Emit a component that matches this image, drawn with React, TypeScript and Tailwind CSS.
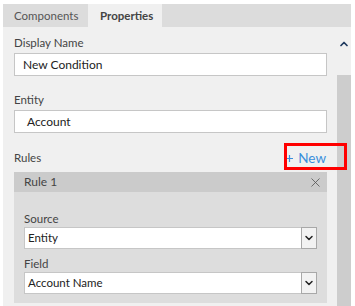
import { ChevronDown, ChevronUp, X } from 'lucide-react';

function TextField({ value, indent }: { value: string; indent: string }) {
  return (
    <div className={`h-[23px] bg-white border border-[#c6c6c6] flex items-center text-[12px] text-[#222] ${indent}`}>
      {value}
    </div>
  );
}

function SelectField({ value }: { value: string }) {
  return (
    <div className="h-[22px] bg-white border border-[#c6c6c6] flex items-center text-[11.5px] text-[#222]">
      <span className="flex-1 pl-[3px]">{value}</span>
      <span className="w-[16px] h-[22px] -mr-px border border-[#a8a8a8] bg-[#f2f2f2] flex items-center justify-center">
        <ChevronDown size={12} strokeWidth={3} className="text-[#222]" />
      </span>
    </div>
  );
}

export default function App() {
  return (
    <div
      className="w-[355px] h-[306px] bg-white pt-[4px] pl-[3px] pr-[4px] overflow-hidden"
      style={{ fontFamily: 'Lato, "Open Sans", sans-serif' }}
    >
      <div className="h-full flex flex-col bg-[#f0f0f0]">
        {/* tabs */}
        <div className="h-[23px] bg-[#dcdcdc] flex text-[11.5px] shrink-0">
          <div className="w-[85px] pl-[11px] flex items-center text-[#555]">Components</div>
          <div className="w-[74px] pl-[12px] flex items-center bg-[#f0f0f0] text-[#444] font-bold">Properties</div>
        </div>

        <div className="flex flex-1 min-h-0">
          {/* content */}
          <div className="flex-1 pl-[11px] pr-[10px] pt-[8px] relative">
            <div className="leading-[16px] text-[11.5px] text-[#444]">Display Name</div>
            <div className="mt-[2px]">
              <TextField value="New Condition" indent="pl-[8px]" />
            </div>

            <div className="leading-[16px] text-[11.5px] text-[#444] mt-[16px]">Entity</div>
            <div className="mt-[2px]">
              <TextField value="Account" indent="pl-[12px]" />
            </div>

            <div className="flex items-center justify-between mt-[17px] h-[16px]">
              <span className="text-[11.5px] text-[#444]">Rules</span>
              <span className="text-[13.5px] text-[#3a8fdc] pr-[1px] flex items-center gap-[5px]">
                <svg width="7" height="7" viewBox="0 0 7 7" className="mt-[1px]">
                  <path d="M3.5 0v7M0 3.5h7" stroke="#3a8fdc" strokeWidth="1.2" fill="none" />
                </svg>
                <span>New</span>
              </span>
            </div>

            <div className="mt-[6px]">
              <div className="h-[20px] bg-[#cbcbcb] flex items-center justify-between pl-[10px] pr-[4px] text-[12px] text-[#444]">
                <span>Rule 1</span>
                <X size={15} strokeWidth={1.3} className="text-[#555]" />
              </div>
              <div className="bg-[#dddddd] pl-[10px] pr-[10px] pt-[19px] pb-[9px]">
                <div className="leading-[16px] text-[11.5px] text-[#444]">Source</div>
                <SelectField value="Entity" />
                <div className="leading-[16px] text-[11.5px] text-[#444] mt-[7px]">Field</div>
                <SelectField value="Account Name" />
              </div>
            </div>

            {/* highlight annotation */}
            <div className="absolute left-[281px] top-[116px] w-[63px] h-[27px] border-[3px] border-[#ff0000]" />
          </div>

          {/* scrollbar */}
          <div className="w-[14px] flex flex-col shrink-0">
            <div className="h-[34px] flex items-center justify-center">
              <ChevronUp size={12} strokeWidth={3.5} className="text-[#1f3a5f]" />
            </div>
            <div className="h-[14px]" />
            <div className="flex-1 bg-[#cdcdcd]" />
          </div>
        </div>
      </div>
    </div>
  );
}
